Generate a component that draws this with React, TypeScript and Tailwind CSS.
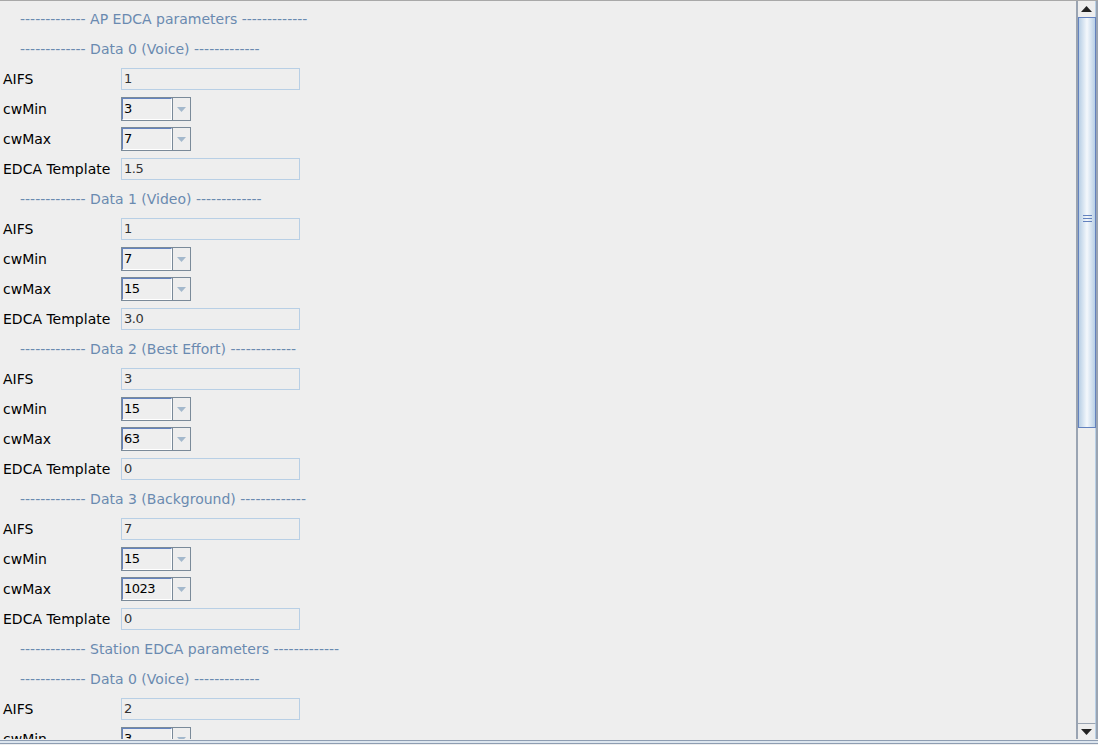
import React from 'react'

type Row =
	| { kind: 'header'; text: string }
	| { kind: 'field'; label: string; value: string }
	| { kind: 'combo'; label: string; value: string }

const dashes = '-------------'

function section(name: string, aifs: string, min: string, max: string, tpl: string): Row[] {
	return [
		{ kind: 'header', text: `${dashes} ${name} ${dashes}` },
		{ kind: 'field', label: 'AIFS', value: aifs },
		{ kind: 'combo', label: 'cwMin', value: min },
		{ kind: 'combo', label: 'cwMax', value: max },
		{ kind: 'field', label: 'EDCA Template', value: tpl },
	]
}

const rows: Row[] = [
	{ kind: 'header', text: `${dashes} AP EDCA parameters ${dashes}` },
	...section('Data 0 (Voice)', '1', '3', '7', '1.5'),
	...section('Data 1 (Video)', '1', '7', '15', '3.0'),
	...section('Data 2 (Best Effort)', '3', '15', '63', '0'),
	...section('Data 3 (Background)', '7', '15', '1023', '0'),
	{ kind: 'header', text: `${dashes} Station EDCA parameters ${dashes}` },
	...section('Data 0 (Voice)', '2', '3', '7', '1.5'),
]

function TextField({ value }: { value: string }) {
	return (
		<div className="w-[179px] h-[22px] border border-[#b8cfe5] bg-[#eeeeee] flex items-center px-[2px] text-[13px] tracking-[-0.5px] text-[#333333]">
			{value}
		</div>
	)
}

function Combo({ value }: { value: string }) {
	return (
		<div className="w-[70px] h-[24px] border border-[#7a8a99] bg-[#eeeeee] flex">
			<div className="w-[50px] h-full border border-[#6382bf] border-b-white border-r-white flex items-center px-[1px] text-[13px] tracking-[-0.5px] text-black">
				{value}
			</div>
			<div className="flex-1 h-full border-l border-[#7a8a99] flex items-center justify-center">
				<svg width="9" height="5" viewBox="0 0 9 5">
					<path d="M0 0 H9 L4.5 5 Z" fill="#a3b8cc" />
				</svg>
			</div>
		</div>
	)
}

function ScrollBar() {
	return (
		<div className="w-[22px] h-full flex flex-col border-l-2 border-r-2 border-[#9aa4b2] bg-[#eeeeee]">
			<div className="h-[16px] flex items-center justify-center border-r border-[#b8cfe5]">
				<svg width="11" height="6" viewBox="0 0 11 6">
					<path d="M5.5 0 L11 6 H0 Z" fill="#222222" />
				</svg>
			</div>
			<div className="h-[411px] border border-[#6382bf] bg-gradient-to-r from-[#b8cfe5] via-[#f4f8fc] to-[#b8cfe5] flex items-center justify-center">
				<div className="flex flex-col gap-[2px] mb-[8px]">
					<div className="w-[9px] h-px bg-[#6382bf]" />
					<div className="w-[9px] h-px bg-[#6382bf]" />
					<div className="w-[9px] h-px bg-[#6382bf]" />
				</div>
			</div>
			<div className="flex-1 border-r border-[#b8cfe5]" />
			<div className="h-[16px] flex items-center justify-center border-t border-[#9aa4b2] border-r border-r-[#b8cfe5]">
				<svg width="11" height="6" viewBox="0 0 11 6">
					<path d="M0 0 H11 L5.5 6 Z" fill="#222222" />
				</svg>
			</div>
		</div>
	)
}

export default function App() {
	return (
		<div
			className="w-[1098px] h-[745px] bg-[#eeeeee] flex flex-col overflow-hidden text-[14px]"
			style={{ fontFamily: '"DejaVu Sans", sans-serif' }}
		>
			<div className="h-px bg-[#a8a8a8]" />
			<div className="h-[738px] flex">
				<div className="flex-1 overflow-hidden pt-[3px] pl-[3px]">
					{rows.map((row, i) =>
						row.kind === 'header' ? (
							<div key={i} className="h-[30px] flex items-center pl-[17px] text-[#6a8ab0]">
								{row.text}
							</div>
						) : (
							<div key={i} className="h-[30px] flex items-center">
								<div className="w-[118px] text-black pt-px">{row.label}</div>
								{row.kind === 'field' ? (
									<TextField value={row.value} />
								) : (
									<Combo value={row.value} />
								)}
							</div>
						)
					)}
				</div>
				<ScrollBar />
			</div>
			<div className="h-px bg-[#eeeeee]" />
			<div className="h-px bg-[#8e9db2]" />
			<div className="h-[2px] bg-[#dde6ef]" />
			<div className="h-px bg-[#8e9db2]" />
			<div className="flex-1 bg-[#eeeeee]" />
		</div>
	)
}
